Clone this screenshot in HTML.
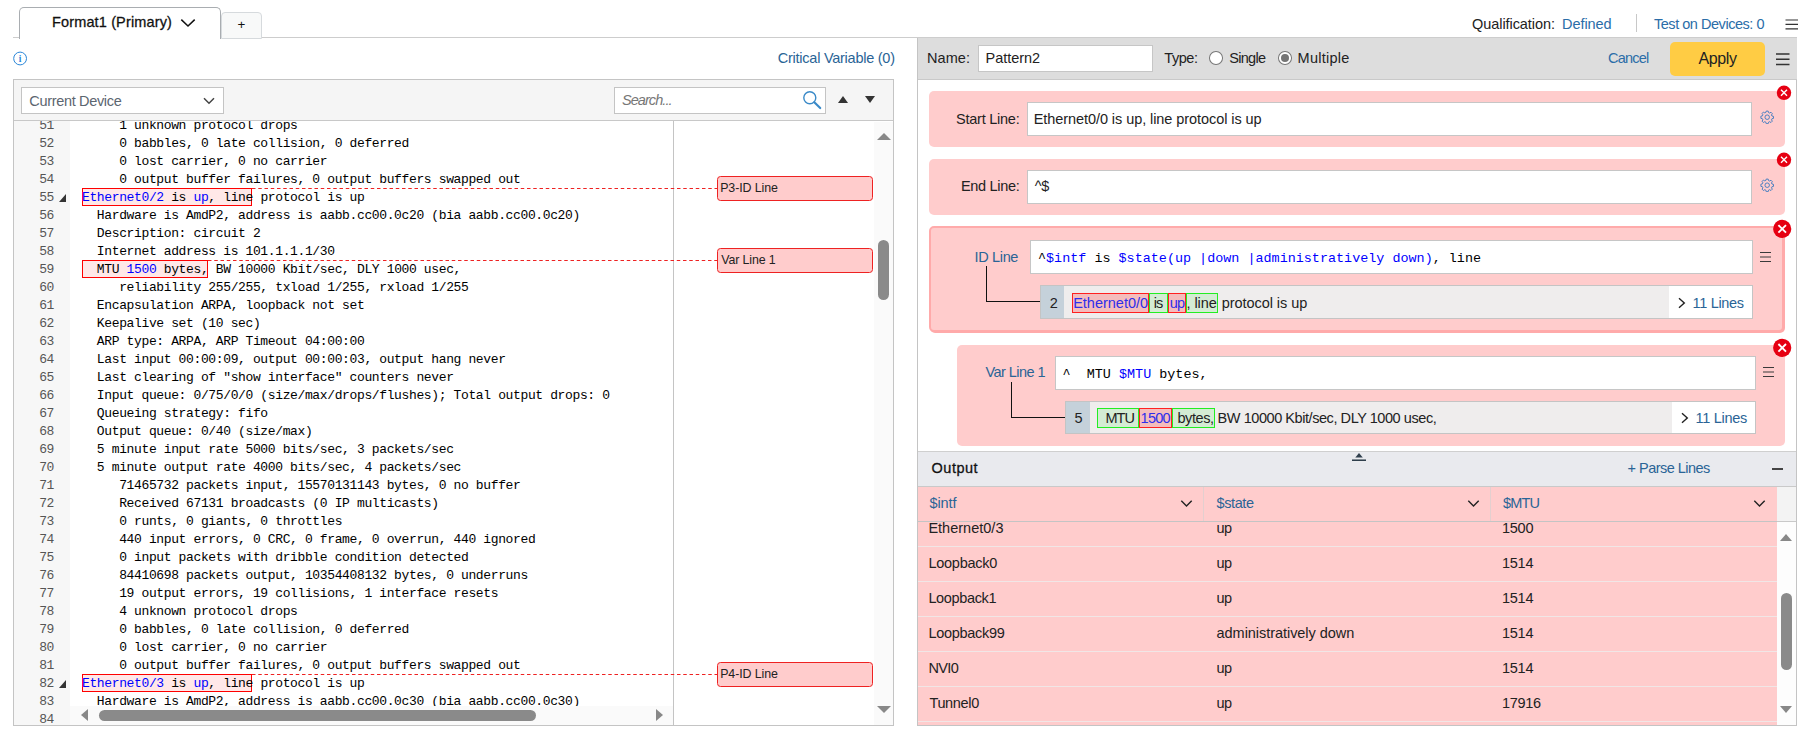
<!DOCTYPE html>
<html lang="en">
<head>
<meta charset="utf-8">
<title>Parser Editor</title>
<style>
*{box-sizing:border-box;margin:0;padding:0}
html,body{width:1800px;height:729px;overflow:hidden;background:#fff}
body{position:relative;font-family:"Liberation Sans",sans-serif;font-size:14.5px;color:#222}
.abs{position:absolute}
.t{position:absolute;white-space:pre;line-height:20px;height:20px}
/* top tabs */
#topline{left:13px;top:37px;width:1784px;height:1px;background:#cdcdcd}
#tab1{left:19px;top:7px;width:202px;height:32px;border:1px solid #a9adb1;border-bottom:none;border-radius:5px 5px 0 0;background:#fff}
#tab2{left:221px;top:12px;width:41px;height:27px;border:1px solid #d6dadd;border-radius:4px 4px 0 0;background:#f8f9f9}
/* left panel */
#lp{left:13px;top:79px;width:881px;height:647px;border:1px solid #c4c4c4;background:#fff}
#ltb{left:14px;top:80px;width:879px;height:41px;background:#f5f5f5;border-bottom:1px solid #c8c8c8}
#sel{left:21px;top:87px;width:203px;height:27px;border:1px solid #c4c4c4;background:#fff}
#srch{left:614px;top:87px;width:212px;height:27px;border:1px solid #c4c4c4;background:#fff}
#codewrap{left:14px;top:121px;width:659px;height:604px;overflow:hidden}
#gutter{left:0;top:0;width:56px;height:604px;background:#f7f7f7}
#nums{left:0;top:-4px;width:40px}
.ln{position:relative;height:18px;line-height:18px;text-align:right;font-family:"Liberation Mono",monospace;font-size:13px;letter-spacing:-0.4px;color:#555}
.fold{position:absolute;left:45px;top:5px;width:0;height:0;border-left:7px solid transparent;border-bottom:8px solid #333}
#code{left:68px;top:-4px;width:900px}
.cl{height:18px;line-height:18px;white-space:pre;font-family:"Liberation Mono",monospace;font-size:13px;letter-spacing:-0.37px;color:#000}
.v{color:#0000ff}
.hl{position:absolute;height:18px;background:#ffe8e8;border:1px solid #ff0000}
#vdiv{left:673px;top:121px;width:1px;height:604px;background:#c4c4c4}
.tag{position:absolute;left:717px;width:156px;height:25px;border:1px solid #ee2222;border-radius:3.5px;background:#ffcccc}
/* right panel */
#rp{left:917px;top:38px;width:880px;height:688px;border:1px solid #c4c4c4;border-top:none;background:#fff}
#rhead{left:918px;top:37px;width:879px;height:43px;background:#dddddd;border-bottom:1px solid #c9c9c9;border-top:1px solid #cdcdcd}
.inp{position:absolute;background:#fff;border:1px solid #c6c6c6}
.pink{position:absolute;background:#ffcccc;border-radius:5px}
.xb{position:absolute;border-radius:50%;background:#e60012}
#outhead{left:918px;top:451px;width:878px;height:36px;background:#e9eaee;border-top:1px solid #cfcfcf;border-bottom:1px solid #c9c9c9}
#thead{left:918px;top:487px;width:859px;height:35px;background:#ffcccc;border-bottom:1px solid #c4c4c4}
#tbody{left:918px;top:522px;width:859px;height:203px;background:#ffcccc}
.rb{position:absolute;left:918px;width:859px;height:1px;background:#f1e6e6}
.mono{font-family:"Liberation Mono",monospace}
.cd{position:absolute;width:1px;top:487px;height:34px;background:#e3cfcf}
.sb{position:absolute;border:1px solid}
.sr{background:#f4bcbc;border-color:#ff2020}
.sg{background:#d4ecd4;border-color:#22ee22}
</style>
</head>
<body>
<!-- top bar -->
<div class="abs" id="topline"></div>
<div class="abs" id="tab1"></div>
<div class="abs" id="tab2"></div>
<svg class="abs" style="left:179px;top:17px" width="18" height="12" viewBox="0 0 18 12"><path d="M2.3 2.6 L9 9 L15.7 2.6" fill="none" stroke="#111" stroke-width="1.5"/></svg>
<div class="t" style="left:237.6px;top:14.6px;font-size:13.4px;color:#111">+</div>
<div class="abs" style="left:1636px;top:14px;width:1px;height:18px;background:#c8c8c8"></div>
<svg class="abs" style="left:1785px;top:18px" width="13" height="13" viewBox="0 0 13 13"><path d="M0.5 2H13M0.5 6.4H13M0.5 10.8H13" stroke="#333" stroke-width="1.2"/></svg>

<!-- info row -->
<svg class="abs" style="left:12px;top:50px" width="17" height="17" viewBox="0 0 17 17"><circle cx="8.1" cy="8.5" r="6.4" fill="none" stroke="#2a86d8" stroke-width="1"/><text x="8.1" y="11.6" text-anchor="middle" font-family="Liberation Serif,serif" font-weight="bold" font-size="9.5" fill="#2a86d8">i</text></svg>

<!-- left panel -->
<div class="abs" id="lp"></div>
<div class="abs" id="ltb"></div>
<div class="abs" id="sel"></div>
<svg class="abs" style="left:202px;top:96px" width="14" height="10" viewBox="0 0 14 10"><path d="M2 2.3 L7 7.3 L12 2.3" fill="none" stroke="#444" stroke-width="1.5"/></svg>
<div class="abs" id="srch"></div>
<svg class="abs" style="left:800px;top:88px" width="24" height="24" viewBox="0 0 24 24"><circle cx="9.8" cy="9.8" r="6" fill="none" stroke="#3a8ac8" stroke-width="1.4"/><path d="M14.3 14.3 L20.2 20" stroke="#3a8ac8" stroke-width="2.2" stroke-linecap="round"/></svg>
<div class="abs" style="left:837.5px;top:96px;width:0;height:0;border-left:5.7px solid transparent;border-right:5.7px solid transparent;border-bottom:7.5px solid #333"></div>
<div class="abs" style="left:864.5px;top:96px;width:0;height:0;border-left:5.7px solid transparent;border-right:5.7px solid transparent;border-top:7.5px solid #333"></div>

<div class="abs" id="codewrap">
  <div class="abs" id="gutter"></div>
  <div class="hl" style="left:68px;top:67px;width:170px"></div>
  <div class="hl" style="left:68px;top:139px;width:126px"></div>
  <div class="hl" style="left:68px;top:553px;width:170px"></div>
  <div class="abs" id="nums">
<div class="ln">51</div>
<div class="ln">52</div>
<div class="ln">53</div>
<div class="ln">54</div>
<div class="ln">55<i class="fold"></i></div>
<div class="ln">56</div>
<div class="ln">57</div>
<div class="ln">58</div>
<div class="ln">59</div>
<div class="ln">60</div>
<div class="ln">61</div>
<div class="ln">62</div>
<div class="ln">63</div>
<div class="ln">64</div>
<div class="ln">65</div>
<div class="ln">66</div>
<div class="ln">67</div>
<div class="ln">68</div>
<div class="ln">69</div>
<div class="ln">70</div>
<div class="ln">71</div>
<div class="ln">72</div>
<div class="ln">73</div>
<div class="ln">74</div>
<div class="ln">75</div>
<div class="ln">76</div>
<div class="ln">77</div>
<div class="ln">78</div>
<div class="ln">79</div>
<div class="ln">80</div>
<div class="ln">81</div>
<div class="ln">82<i class="fold"></i></div>
<div class="ln">83</div>
<div class="ln">84</div>
  </div>
  <div class="abs" id="code">
<div class="cl">     1 unknown protocol drops</div>
<div class="cl">     0 babbles, 0 late collision, 0 deferred</div>
<div class="cl">     0 lost carrier, 0 no carrier</div>
<div class="cl">     0 output buffer failures, 0 output buffers swapped out</div>
<div class="cl"><span class="v">Ethernet0/2</span> is <span class="v">up</span>, line protocol is up</div>
<div class="cl">  Hardware is AmdP2, address is aabb.cc00.0c20 (bia aabb.cc00.0c20)</div>
<div class="cl">  Description: circuit 2</div>
<div class="cl">  Internet address is 101.1.1.1/30</div>
<div class="cl">  MTU <span class="v">1500</span> bytes, BW 10000 Kbit/sec, DLY 1000 usec, </div>
<div class="cl">     reliability 255/255, txload 1/255, rxload 1/255</div>
<div class="cl">  Encapsulation ARPA, loopback not set</div>
<div class="cl">  Keepalive set (10 sec)</div>
<div class="cl">  ARP type: ARPA, ARP Timeout 04:00:00</div>
<div class="cl">  Last input 00:00:09, output 00:00:03, output hang never</div>
<div class="cl">  Last clearing of "show interface" counters never</div>
<div class="cl">  Input queue: 0/75/0/0 (size/max/drops/flushes); Total output drops: 0</div>
<div class="cl">  Queueing strategy: fifo</div>
<div class="cl">  Output queue: 0/40 (size/max)</div>
<div class="cl">  5 minute input rate 5000 bits/sec, 3 packets/sec</div>
<div class="cl">  5 minute output rate 4000 bits/sec, 4 packets/sec</div>
<div class="cl">     71465732 packets input, 15570131143 bytes, 0 no buffer</div>
<div class="cl">     Received 67131 broadcasts (0 IP multicasts)</div>
<div class="cl">     0 runts, 0 giants, 0 throttles</div>
<div class="cl">     440 input errors, 0 CRC, 0 frame, 0 overrun, 440 ignored</div>
<div class="cl">     0 input packets with dribble condition detected</div>
<div class="cl">     84410698 packets output, 10354408132 bytes, 0 underruns</div>
<div class="cl">     19 output errors, 19 collisions, 1 interface resets</div>
<div class="cl">     4 unknown protocol drops</div>
<div class="cl">     0 babbles, 0 late collision, 0 deferred</div>
<div class="cl">     0 lost carrier, 0 no carrier</div>
<div class="cl">     0 output buffer failures, 0 output buffers swapped out</div>
<div class="cl"><span class="v">Ethernet0/3</span> is <span class="v">up</span>, line protocol is up</div>
<div class="cl">  Hardware is AmdP2, address is aabb.cc00.0c30 (bia aabb.cc00.0c30)</div>
<div class="cl"></div>
  </div>
  <!-- horizontal scrollbar -->
  <div class="abs" style="left:56px;top:585px;width:604px;height:19px;background:#fafafa"></div>
  <div class="abs" style="left:67px;top:588px;width:0;height:0;border-top:6.5px solid transparent;border-bottom:6.5px solid transparent;border-right:7.5px solid #888"></div>
  <div class="abs" style="left:641.5px;top:588px;width:0;height:0;border-top:6.5px solid transparent;border-bottom:6.5px solid transparent;border-left:7.5px solid #888"></div>
  <div class="abs" style="left:85px;top:589px;width:437px;height:11px;border-radius:5.5px;background:#8a8a8a"></div>
</div>
<div class="abs" id="vdiv"></div>
<!-- dashed connectors -->
<svg class="abs" style="left:0;top:180px" width="720" height="500" viewBox="0 0 720 500"><g stroke="#ee2222" stroke-width="1" stroke-dasharray="3.5 2.75" fill="none"><path d="M252 8.5H717"/><path d="M208 80.5H717"/><path d="M252 494.5H717"/></g></svg>
<div class="tag" style="top:176px"></div>
<div class="tag" style="top:248px"></div>
<div class="tag" style="top:662px"></div>
<!-- left v-scrollbar -->
<div class="abs" style="left:874px;top:122px;width:19px;height:603px;background:#fafafa"></div>
<div class="abs" style="left:876.5px;top:133px;width:0;height:0;border-left:7px solid transparent;border-right:7px solid transparent;border-bottom:7.5px solid #888"></div>
<div class="abs" style="left:876.5px;top:706px;width:0;height:0;border-left:7px solid transparent;border-right:7px solid transparent;border-top:7.5px solid #888"></div>
<div class="abs" style="left:878px;top:240px;width:11px;height:60px;border-radius:5.5px;background:#8a8a8a"></div>

<!-- right panel -->
<div class="abs" id="rp"></div>
<div class="abs" id="rhead"></div>
<div class="inp" style="left:978px;top:45px;width:175px;height:27px"></div>
<div class="abs" style="left:1209px;top:51.3px;width:13.8px;height:13.6px;border-radius:50%;border:1px solid #777;background:#fff"></div>
<div class="abs" style="left:1278px;top:51.3px;width:13.8px;height:13.6px;border-radius:50%;border:1px solid #777;background:#fff"></div>
<div class="abs" style="left:1281px;top:54.2px;width:7.8px;height:7.8px;border-radius:50%;background:#757575"></div>
<div class="abs" style="left:1670px;top:42px;width:95px;height:34px;border-radius:5px;background:#ffcc44"></div>
<svg class="abs" style="left:1776px;top:52px" width="14" height="14" viewBox="0 0 14 14"><path d="M0 2H13.5M0 7.3H13.5M0 12.5H13.5" stroke="#333" stroke-width="1.5"/></svg>

<!-- Start line -->
<div class="pink" style="left:929px;top:91px;width:856px;height:56px"></div>
<div class="inp" style="left:1027px;top:102px;width:725px;height:34px"></div>
<!-- End line -->
<div class="pink" style="left:929px;top:159px;width:856px;height:56px"></div>
<div class="inp" style="left:1027px;top:170px;width:725px;height:34px"></div>
<!-- ID line -->
<div class="pink" style="left:929px;top:226px;width:855px;height:106px;border:2px solid #ffaaaa;box-shadow:1px 1px 0 #ffaaaa"></div>
<div class="inp" style="left:1030px;top:240px;width:723px;height:34px"></div>
<div class="t mono" style="left:1038px;top:248.5px;font-size:13.43px;color:#000">^<span class="v">$intf</span> is <span class="v">$state(up |down |administratively down)</span>, line</div>
<div class="abs" style="left:986px;top:266px;width:54px;height:36px;border-left:1px solid #111;border-bottom:1px solid #111"></div>
<div class="inp" style="left:1040px;top:285px;width:713px;height:34px;background:#efeded;border-color:#c4c4c4"></div>
<div class="abs" style="left:1041px;top:286px;width:23px;height:32px;background:#c5d1da"></div>
<div class="abs" style="left:1669px;top:286px;width:83px;height:32px;background:#fff"></div>
<div class="sb sr" style="left:1072px;top:293px;width:77px;height:20px"></div>
<div class="sb sg" style="left:1149px;top:293px;width:19px;height:20px"></div>
<div class="sb sr" style="left:1168px;top:293px;width:18px;height:20px"></div>
<div class="sb sg" style="left:1186px;top:293px;width:32px;height:20px"></div>
<!-- Var line -->
<div class="pink" style="left:957px;top:345px;width:828px;height:101px"></div>
<div class="inp" style="left:1055px;top:356px;width:701px;height:34px"></div>
<div class="t mono" style="left:1062.6px;top:364.5px;font-size:13.43px;color:#000">^  MTU <span class="v">$MTU</span> bytes,</div>
<div class="abs" style="left:1011px;top:382px;width:54px;height:36px;border-left:1px solid #111;border-bottom:1px solid #111"></div>
<div class="inp" style="left:1065px;top:401px;width:691px;height:33px;background:#efeded;border-color:#c4c4c4"></div>
<div class="abs" style="left:1066px;top:402px;width:24px;height:31px;background:#c5d1da"></div>
<div class="abs" style="left:1672px;top:402px;width:83px;height:31px;background:#fff"></div>
<div class="sb sg" style="left:1097px;top:408px;width:42px;height:20px"></div>
<div class="sb sr" style="left:1139px;top:408px;width:33px;height:20px"></div>
<div class="sb sg" style="left:1172px;top:408px;width:43px;height:20px"></div>

<!-- Output -->
<div class="abs" id="outhead"></div>
<div class="abs" style="left:1772px;top:468px;width:11px;height:2px;background:#444"></div>
<div class="abs" id="thead"></div>
<div class="abs" style="left:1777px;top:487px;width:19px;height:35px;background:#f3f3f3;border-bottom:1px solid #c9c9c9"></div>
<div class="abs" id="tbody"></div>
<div class="cd" style="left:1203px"></div>
<div class="cd" style="left:1490px"></div>
<div class="rb" style="top:546px"></div>
<div class="rb" style="top:581px"></div>
<div class="rb" style="top:616px"></div>
<div class="rb" style="top:651px"></div>
<div class="rb" style="top:686px"></div>
<div class="rb" style="top:721px"></div>

<!-- icons: close buttons -->
<svg class="abs" style="left:1776px;top:85px" width="16" height="16" viewBox="0 0 16 16"><circle cx="8" cy="7.8" r="7.2" fill="#e60012"/><path d="M5 4.8L11 10.8M11 4.8L5 10.8" stroke="#fff" stroke-width="1.4"/></svg>
<svg class="abs" style="left:1776px;top:152px" width="16" height="16" viewBox="0 0 16 16"><circle cx="8" cy="7.8" r="7.2" fill="#e60012"/><path d="M5 4.8L11 10.8M11 4.8L5 10.8" stroke="#fff" stroke-width="1.4"/></svg>
<svg class="abs" style="left:1772px;top:219px" width="20" height="20" viewBox="0 0 20 20"><circle cx="10.2" cy="9.9" r="9.1" fill="#e60012"/><path d="M6.4 6.1L14 13.7M14 6.1L6.4 13.7" stroke="#fff" stroke-width="1.9"/></svg>
<svg class="abs" style="left:1772px;top:338px" width="20" height="20" viewBox="0 0 20 20"><circle cx="10.2" cy="9.8" r="9.1" fill="#e60012"/><path d="M6.4 6L14 13.6M14 6L6.4 13.6" stroke="#fff" stroke-width="1.9"/></svg>
<!-- gears -->
<svg class="abs gear" style="left:1759.8px;top:109.8px" width="14.4" height="14.4" viewBox="0 0 16 16"><g fill="none" stroke="#3a78c0" stroke-width="1"><circle cx="8" cy="8" r="2.5"/><path d="M6.9 1.2h2.2l.4 1.7 1.2.5 1.5-.9 1.5 1.5-.9 1.5.5 1.2 1.7.4v2.2l-1.7.4-.5 1.2.9 1.5-1.5 1.5-1.5-.9-1.2.5-.4 1.7H6.9l-.4-1.7-1.2-.5-1.5.9-1.5-1.5.9-1.5-.5-1.2-1.7-.4V6.9l1.7-.4.5-1.2-.9-1.5 1.5-1.5 1.5.9 1.2-.5z"/></g></svg>
<svg class="abs gear" style="left:1759.8px;top:177.8px" width="14.4" height="14.4" viewBox="0 0 16 16"><g fill="none" stroke="#3a78c0" stroke-width="1"><circle cx="8" cy="8" r="2.5"/><path d="M6.9 1.2h2.2l.4 1.7 1.2.5 1.5-.9 1.5 1.5-.9 1.5.5 1.2 1.7.4v2.2l-1.7.4-.5 1.2.9 1.5-1.5 1.5-1.5-.9-1.2.5-.4 1.7H6.9l-.4-1.7-1.2-.5-1.5.9-1.5-1.5.9-1.5-.5-1.2-1.7-.4V6.9l1.7-.4.5-1.2-.9-1.5 1.5-1.5 1.5.9 1.2-.5z"/></g></svg>
<!-- small hamburgers -->
<svg class="abs" style="left:1759px;top:249.6px" width="13" height="13" viewBox="0 0 13 13"><path d="M1 2.5H12M1 7H12M1 11.5H12" stroke="#3a3a3a" stroke-width="1.1"/></svg>
<svg class="abs" style="left:1762px;top:364.6px" width="13" height="13" viewBox="0 0 13 13"><path d="M1 2.5H12M1 7H12M1 11.5H12" stroke="#3a3a3a" stroke-width="1.1"/></svg>
<!-- > chevrons -->
<svg class="abs" style="left:1677px;top:297px" width="9" height="12" viewBox="0 0 9 12"><path d="M2 1.3L7.3 6L2 10.8" fill="none" stroke="#222" stroke-width="1.4"/></svg>
<svg class="abs" style="left:1680px;top:412px" width="9" height="12" viewBox="0 0 9 12"><path d="M2 1.3L7.3 6L2 10.8" fill="none" stroke="#222" stroke-width="1.4"/></svg>
<!-- header chevrons -->
<svg class="abs" style="left:1180px;top:499px" width="13" height="9" viewBox="0 0 13 9"><path d="M1.3 1.8L6.5 7L11.7 1.8" fill="none" stroke="#222" stroke-width="1.4"/></svg>
<svg class="abs" style="left:1467px;top:499px" width="13" height="9" viewBox="0 0 13 9"><path d="M1.3 1.8L6.5 7L11.7 1.8" fill="none" stroke="#222" stroke-width="1.4"/></svg>
<svg class="abs" style="left:1753px;top:499px" width="13" height="9" viewBox="0 0 13 9"><path d="M1.3 1.8L6.5 7L11.7 1.8" fill="none" stroke="#222" stroke-width="1.4"/></svg>
<!-- splitter handle -->
<svg class="abs" style="left:1350px;top:451px" width="18" height="12" viewBox="0 0 18 12"><path d="M5.3 6.5L9 2L12.8 6.5Z" fill="#2f3f4c"/><path d="M2 9.3H16" stroke="#2f3f4c" stroke-width="1.7"/><path d="M2 10.6H16" stroke="#f6f6f8" stroke-width="0.8"/></svg>
<!-- table scrollbar -->
<div class="abs" style="left:1777px;top:522px;width:19px;height:203px;background:#fdfdfd"></div>
<div class="abs" style="left:1780px;top:534px;width:0;height:0;border-left:6.7px solid transparent;border-right:6.7px solid transparent;border-bottom:7px solid #888"></div>
<div class="abs" style="left:1780px;top:706px;width:0;height:0;border-left:6.7px solid transparent;border-right:6.7px solid transparent;border-top:7px solid #888"></div>
<div class="abs" style="left:1781px;top:593px;width:11px;height:77px;border-radius:5.5px;background:#8a8a8a"></div>
<!-- texts -->
<div class="t" style="left:52.0px;top:12.0px;font-size:14.5px;color:#111;letter-spacing:0.14px;-webkit-text-stroke:0.28px #111">Format1 (Primary)</div>
<div class="t" style="left:1472.0px;top:14.4px;font-size:14.5px;color:#222;letter-spacing:-0.06px;">Qualification:</div>
<div class="t" style="left:1562.0px;top:14.4px;font-size:14.5px;color:#2b6da8;letter-spacing:-0.05px;">Defined</div>
<div class="t" style="left:1654.0px;top:14.4px;font-size:14.5px;color:#2b6da8;letter-spacing:-0.47px;">Test on Devices: 0</div>
<div class="t" style="left:777.8px;top:48.1px;font-size:14.5px;color:#2a6496;letter-spacing:-0.25px;">Critical Variable (0)</div>
<div class="t" style="left:29.3px;top:90.7px;font-size:14.5px;color:#5c6670;letter-spacing:-0.33px;">Current Device</div>
<div class="t" style="left:621.9px;top:89.9px;font-size:14.5px;color:#777;letter-spacing:-0.92px;font-style:italic">Search...</div>
<div class="t" style="left:927.0px;top:47.8px;font-size:14.5px;color:#222;letter-spacing:0.08px;">Name:</div>
<div class="t" style="left:985.6px;top:47.8px;font-size:14.5px;color:#222;letter-spacing:-0.05px;">Pattern2</div>
<div class="t" style="left:1164.3px;top:47.8px;font-size:14.5px;color:#222;letter-spacing:-0.46px;">Type:</div>
<div class="t" style="left:1229.3px;top:47.8px;font-size:14.5px;color:#222;letter-spacing:-0.71px;">Single</div>
<div class="t" style="left:1297.6px;top:47.8px;font-size:14.5px;color:#222;letter-spacing:0.26px;">Multiple</div>
<div class="t" style="left:1608.0px;top:48.0px;font-size:14.5px;color:#2b6da8;letter-spacing:-0.78px;">Cancel</div>
<div class="t" style="left:1698.6px;top:48.9px;font-size:16px;color:#222;letter-spacing:-0.41px;">Apply</div>
<div class="t" style="left:956.0px;top:109.1px;font-size:14.5px;color:#222;letter-spacing:-0.24px;">Start Line:</div>
<div class="t" style="left:1033.7px;top:109.1px;font-size:14.5px;color:#222;letter-spacing:-0.07px;">Ethernet0/0 is up, line protocol is up</div>
<div class="t" style="left:961.0px;top:176.1px;font-size:14.5px;color:#222;letter-spacing:-0.32px;">End Line:</div>
<div class="t" style="left:1034.7px;top:176.1px;font-size:14.5px;color:#222;letter-spacing:-0.20px;">^$</div>
<div class="t" style="left:974.6px;top:247.0px;font-size:14.5px;color:#2a6496;letter-spacing:-0.35px;">ID Line</div>
<div class="t" style="left:1049.7px;top:293.0px;font-size:14.5px;color:#222;letter-spacing:0.00px;">2</div>
<div class="t" style="left:1692.5px;top:293.0px;font-size:14.5px;color:#2a6496;letter-spacing:-0.31px;">11 Lines</div>
<div class="t" style="left:985.6px;top:362.0px;font-size:14.5px;color:#2a6496;letter-spacing:-0.57px;">Var Line 1</div>
<div class="t" style="left:1074.4px;top:408.4px;font-size:14.5px;color:#222;letter-spacing:0.00px;">5</div>
<div class="t" style="left:1695.5px;top:408.4px;font-size:14.5px;color:#2a6496;letter-spacing:-0.28px;">11 Lines</div>
<div class="t" style="left:931.6px;top:458.0px;font-size:14.5px;color:#111;letter-spacing:0.50px;-webkit-text-stroke:0.28px #111">Output</div>
<div class="t" style="left:1627.6px;top:458.0px;font-size:14.5px;color:#2a6496;letter-spacing:-0.53px;">+ Parse Lines</div>
<div class="t" style="left:929.4px;top:493.0px;font-size:14.5px;color:#2a6496;letter-spacing:-0.04px;">$intf</div>
<div class="t" style="left:1216.6px;top:493.0px;font-size:14.5px;color:#2a6496;letter-spacing:-0.41px;">$state</div>
<div class="t" style="left:1503.0px;top:493.0px;font-size:14.5px;color:#2a6496;letter-spacing:-0.87px;">$MTU</div>
<div class="t" style="left:720.2px;top:178.1px;font-size:12.4px;color:#222;letter-spacing:-0.09px;">P3-ID Line</div>
<div class="t" style="left:721.2px;top:250.1px;font-size:12.4px;color:#222;letter-spacing:-0.11px;">Var Line 1</div>
<div class="t" style="left:720.2px;top:664.1px;font-size:12.4px;color:#222;letter-spacing:-0.09px;">P4-ID Line</div>
<div class="t" style="left:1073.2px;top:293.0px;font-size:14.5px;color:#2e2eea;letter-spacing:-0.01px;">Ethernet0/0</div>
<div class="t" style="left:1153.7px;top:293.0px;font-size:14.5px;color:#222;letter-spacing:-0.92px;">is</div>
<div class="t" style="left:1169.7px;top:293.0px;font-size:14.5px;color:#2e2eea;letter-spacing:-0.76px;">up</div>
<div class="t" style="left:1186.5px;top:293.0px;font-size:14.5px;color:#222;letter-spacing:-0.07px;">, line</div>
<div class="t" style="left:1221.7px;top:293.0px;font-size:14.5px;color:#222;letter-spacing:-0.05px;">protocol is up</div>
<div class="t" style="left:1105.4px;top:408.4px;font-size:14.5px;color:#222;letter-spacing:-0.97px;">MTU</div>
<div class="t" style="left:1140.6px;top:408.4px;font-size:14.5px;color:#2e2eea;letter-spacing:-0.73px;">1500</div>
<div class="t" style="left:1177.4px;top:408.4px;font-size:14.5px;color:#222;letter-spacing:-0.41px;">bytes,</div>
<div class="t" style="left:1217.6px;top:408.4px;font-size:14.5px;color:#222;letter-spacing:-0.44px;">BW 10000 Kbit/sec, DLY 1000 usec,</div>
<div class="t" style="left:928.4px;top:518.0px;font-size:14.5px;color:#222;letter-spacing:0.01px;">Ethernet0/3</div>
<div class="t" style="left:1216.6px;top:518.0px;font-size:14.5px;color:#222;letter-spacing:-0.66px;">up</div>
<div class="t" style="left:1502.0px;top:518.0px;font-size:14.5px;color:#222;letter-spacing:-0.26px;">1500</div>
<div class="t" style="left:928.4px;top:553.0px;font-size:14.5px;color:#222;letter-spacing:-0.25px;">Loopback0</div>
<div class="t" style="left:1216.6px;top:553.0px;font-size:14.5px;color:#222;letter-spacing:-0.66px;">up</div>
<div class="t" style="left:1502.0px;top:553.0px;font-size:14.5px;color:#222;letter-spacing:-0.26px;">1514</div>
<div class="t" style="left:928.4px;top:588.0px;font-size:14.5px;color:#222;letter-spacing:-0.35px;">Loopback1</div>
<div class="t" style="left:1216.6px;top:588.0px;font-size:14.5px;color:#222;letter-spacing:-0.66px;">up</div>
<div class="t" style="left:1502.0px;top:588.0px;font-size:14.5px;color:#222;letter-spacing:-0.26px;">1514</div>
<div class="t" style="left:928.4px;top:623.0px;font-size:14.5px;color:#222;letter-spacing:-0.28px;">Loopback99</div>
<div class="t" style="left:1216.6px;top:623.0px;font-size:14.5px;color:#222;letter-spacing:-0.05px;">administratively down</div>
<div class="t" style="left:1502.0px;top:623.0px;font-size:14.5px;color:#222;letter-spacing:-0.26px;">1514</div>
<div class="t" style="left:928.4px;top:658.0px;font-size:14.5px;color:#222;letter-spacing:-0.62px;">NVI0</div>
<div class="t" style="left:1216.6px;top:658.0px;font-size:14.5px;color:#222;letter-spacing:-0.66px;">up</div>
<div class="t" style="left:1502.0px;top:658.0px;font-size:14.5px;color:#222;letter-spacing:-0.26px;">1514</div>
<div class="t" style="left:929.4px;top:693.0px;font-size:14.5px;color:#222;letter-spacing:-0.33px;">Tunnel0</div>
<div class="t" style="left:1216.6px;top:693.0px;font-size:14.5px;color:#222;letter-spacing:-0.66px;">up</div>
<div class="t" style="left:1502.0px;top:693.0px;font-size:14.5px;color:#222;letter-spacing:-0.31px;">17916</div>
</body>
</html>
